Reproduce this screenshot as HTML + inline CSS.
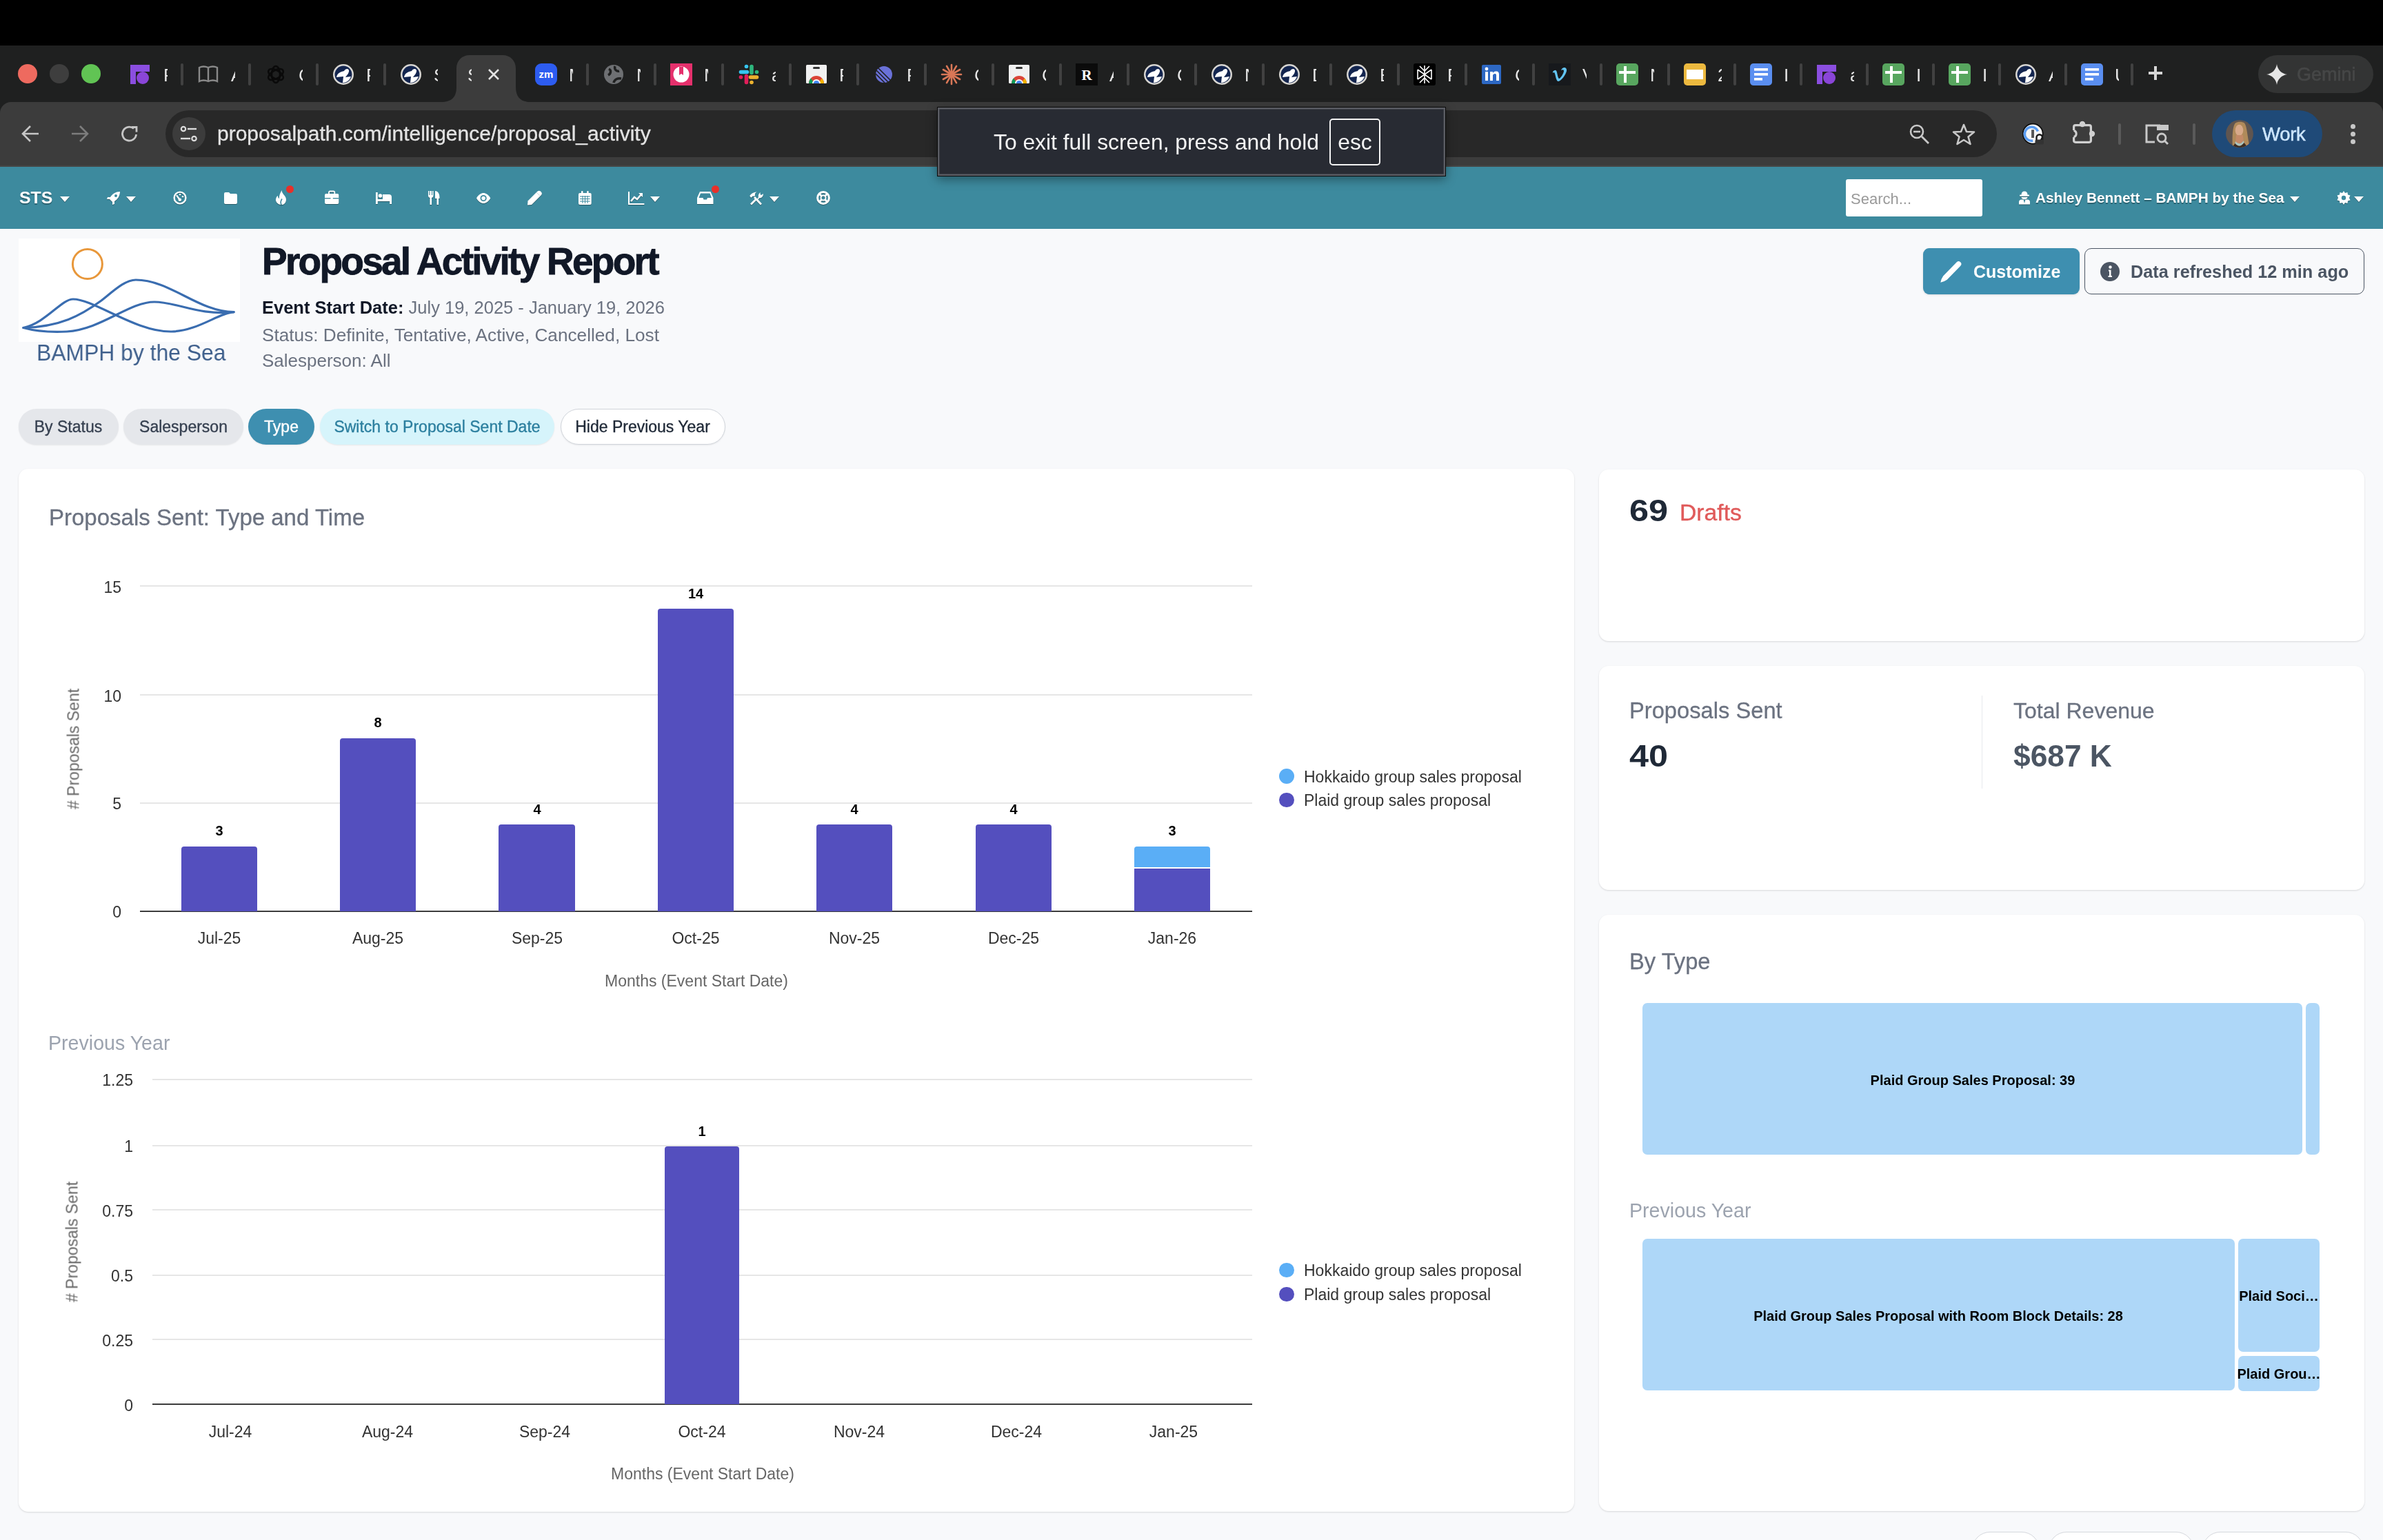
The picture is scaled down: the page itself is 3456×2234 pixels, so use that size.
<!DOCTYPE html>
<html><head><meta charset="utf-8"><title>Proposal Activity Report</title>
<style>
html,body{margin:0;padding:0;width:3456px;height:2234px;overflow:hidden;background:#f8f9fb;font-family:"Liberation Sans", sans-serif;}
.t{will-change:transform;position:absolute;white-space:nowrap;font-family:"Liberation Sans", sans-serif;}
svg{overflow:visible}
</style></head><body>
<div style="position:absolute;left:0px;top:0px;width:3456px;height:66px;background:#000"></div><div style="position:absolute;left:0px;top:66px;width:3456px;height:110px;background:#1f2020"></div><div style="position:absolute;left:25.799999999999997px;top:93px;width:28px;height:28px;background:#ee6a5f;border-radius:50%"></div><div style="position:absolute;left:72px;top:93px;width:28px;height:28px;background:#3e3e3e;border-radius:50%"></div><div style="position:absolute;left:118px;top:93px;width:28px;height:28px;background:#61c454;border-radius:50%"></div><div style="position:absolute;left:261.8px;top:92px;width:4px;height:32px;background:#414141;border-radius:2px"></div><div style="position:absolute;left:360px;top:92px;width:4px;height:32px;background:#414141;border-radius:2px"></div><div style="position:absolute;left:457.7px;top:92px;width:4px;height:32px;background:#414141;border-radius:2px"></div><div style="position:absolute;left:555.9px;top:92px;width:4px;height:32px;background:#414141;border-radius:2px"></div><div style="position:absolute;left:850px;top:92px;width:4px;height:32px;background:#414141;border-radius:2px"></div><div style="position:absolute;left:947.7px;top:92px;width:4px;height:32px;background:#414141;border-radius:2px"></div><div style="position:absolute;left:1045.6px;top:92px;width:4px;height:32px;background:#414141;border-radius:2px"></div><div style="position:absolute;left:1143.8px;top:92px;width:4px;height:32px;background:#414141;border-radius:2px"></div><div style="position:absolute;left:1241.5px;top:92px;width:4px;height:32px;background:#414141;border-radius:2px"></div><div style="position:absolute;left:1339.8px;top:92px;width:4px;height:32px;background:#414141;border-radius:2px"></div><div style="position:absolute;left:1437.8px;top:92px;width:4px;height:32px;background:#414141;border-radius:2px"></div><div style="position:absolute;left:1535.7px;top:92px;width:4px;height:32px;background:#414141;border-radius:2px"></div><div style="position:absolute;left:1633.9px;top:92px;width:4px;height:32px;background:#414141;border-radius:2px"></div><div style="position:absolute;left:1731.8px;top:92px;width:4px;height:32px;background:#414141;border-radius:2px"></div><div style="position:absolute;left:1829.8px;top:92px;width:4px;height:32px;background:#414141;border-radius:2px"></div><div style="position:absolute;left:1928px;top:92px;width:4px;height:32px;background:#414141;border-radius:2px"></div><div style="position:absolute;left:2025.8px;top:92px;width:4px;height:32px;background:#414141;border-radius:2px"></div><div style="position:absolute;left:2123.6px;top:92px;width:4px;height:32px;background:#414141;border-radius:2px"></div><div style="position:absolute;left:2222px;top:92px;width:4px;height:32px;background:#414141;border-radius:2px"></div><div style="position:absolute;left:2320px;top:92px;width:4px;height:32px;background:#414141;border-radius:2px"></div><div style="position:absolute;left:2418px;top:92px;width:4px;height:32px;background:#414141;border-radius:2px"></div><div style="position:absolute;left:2513.8px;top:92px;width:4px;height:32px;background:#414141;border-radius:2px"></div><div style="position:absolute;left:2609.9px;top:92px;width:4px;height:32px;background:#414141;border-radius:2px"></div><div style="position:absolute;left:2705.8px;top:92px;width:4px;height:32px;background:#414141;border-radius:2px"></div><div style="position:absolute;left:2801.7px;top:92px;width:4px;height:32px;background:#414141;border-radius:2px"></div><div style="position:absolute;left:2898px;top:92px;width:4px;height:32px;background:#414141;border-radius:2px"></div><div style="position:absolute;left:2993.8px;top:92px;width:4px;height:32px;background:#414141;border-radius:2px"></div><div style="position:absolute;left:3090px;top:92px;width:4px;height:32px;background:#414141;border-radius:2px"></div><svg style="position:absolute;left:188px;top:92px;" width="32" height="32" viewBox="0 0 32 32"><rect x="1" y="2" width="28" height="28" fill="#8b4ee0"/><rect x="9" y="12" width="20" height="18" fill="#1f2020"/><circle cx="19" cy="21" r="9" fill="#8a45d8"/></svg><div class="t" style="left:237px;top:94px;width:6px;height:30px;overflow:hidden;font-size:26px;line-height:30px;color:#e6e6e6">F</div><svg style="position:absolute;left:285.8px;top:92px;" width="32" height="32" viewBox="0 0 32 32"><path d="M3 6 Q9 3 16 6 Q23 3 29 6 V26 Q23 23 16 26 Q9 23 3 26 Z M16 6 V26" fill="none" stroke="#8a8a8a" stroke-width="2.4"/></svg><div class="t" style="left:334.8px;top:94px;width:6px;height:30px;overflow:hidden;font-size:26px;line-height:30px;color:#e6e6e6">A</div><svg style="position:absolute;left:384px;top:92px;" width="32" height="32" viewBox="0 0 32 32"><g fill="none" stroke="#0a0a0a" stroke-width="2.5"><ellipse cx="16" cy="16" rx="6" ry="12"/><ellipse cx="16" cy="16" rx="6" ry="12" transform="rotate(60 16 16)"/><ellipse cx="16" cy="16" rx="6" ry="12" transform="rotate(120 16 16)"/></g></svg><div class="t" style="left:433px;top:94px;width:6px;height:30px;overflow:hidden;font-size:26px;line-height:30px;color:#e6e6e6">C</div><svg style="position:absolute;left:481.7px;top:92px;" width="32" height="32" viewBox="0 0 32 32"><circle cx="16" cy="16" r="15" fill="#d8d6d2"/><circle cx="16" cy="16" r="12.5" fill="#13254f"/><path d="M6 20 C7 14 12 12 17 11 C19 7 25 7 24 12 C23 16 20 18 19 20 L27 19 C25 25 20 28 15 28 L16 19 C12 19 9 20 6 20 Z" fill="#fff"/></svg><div class="t" style="left:530.7px;top:94px;width:6px;height:30px;overflow:hidden;font-size:26px;line-height:30px;color:#e6e6e6">P</div><svg style="position:absolute;left:579.9px;top:92px;" width="32" height="32" viewBox="0 0 32 32"><circle cx="16" cy="16" r="15" fill="#d8d6d2"/><circle cx="16" cy="16" r="12.5" fill="#13254f"/><path d="M6 20 C7 14 12 12 17 11 C19 7 25 7 24 12 C23 16 20 18 19 20 L27 19 C25 25 20 28 15 28 L16 19 C12 19 9 20 6 20 Z" fill="#fff"/></svg><div class="t" style="left:628.9px;top:94px;width:6px;height:30px;overflow:hidden;font-size:26px;line-height:30px;color:#e6e6e6">S</div><svg style="position:absolute;left:775.7px;top:92px;" width="32" height="32" viewBox="0 0 32 32"><rect x="0" y="0" width="32" height="32" rx="9" fill="#2d5cf0"/><text x="16" y="21" font-family="Liberation Sans" font-weight="700" font-size="15" fill="#fff" text-anchor="middle">zm</text></svg><div class="t" style="left:824.7px;top:94px;width:6px;height:30px;overflow:hidden;font-size:26px;line-height:30px;color:#e6e6e6">M</div><svg style="position:absolute;left:874px;top:92px;" width="32" height="32" viewBox="0 0 32 32"><circle cx="16" cy="16" r="14" fill="#6e7073"/><path d="M9 8 C13 10 12 15 8 17 M18 4 C16 9 21 12 24 11 M16 28 C17 23 22 21 27 22" stroke="#1f2020" stroke-width="3.5" fill="none"/></svg><div class="t" style="left:923px;top:94px;width:6px;height:30px;overflow:hidden;font-size:26px;line-height:30px;color:#e6e6e6">N</div><svg style="position:absolute;left:971.7px;top:92px;" width="32" height="32" viewBox="0 0 32 32"><rect x="0" y="0" width="32" height="32" fill="#e5306c"/><circle cx="16" cy="16" r="11.5" fill="#fff"/><path d="M13 5 V17 L16 15 L19 17 V5" fill="#e5306c"/></svg><div class="t" style="left:1020.7px;top:94px;width:6px;height:30px;overflow:hidden;font-size:26px;line-height:30px;color:#e6e6e6">M</div><svg style="position:absolute;left:1069.6px;top:92px;" width="32" height="32" viewBox="0 0 32 32"><g stroke-linecap="round" stroke-width="5.6"><path d="M4.5 12.5 H13.5" stroke="#36c5f0"/><path d="M20 4.5 V13.5" stroke="#2eb67d"/><path d="M12.5 18.5 V27.5" stroke="#e01e5a"/><path d="M18.5 20 H27.5" stroke="#ecb22e"/></g><circle cx="12.5" cy="4.5" r="2.8" fill="#36c5f0"/><circle cx="27.5" cy="12.5" r="2.8" fill="#2eb67d"/><circle cx="4.5" cy="20" r="2.8" fill="#e01e5a"/><circle cx="20" cy="27.5" r="2.8" fill="#ecb22e"/></svg><div class="t" style="left:1118.6px;top:94px;width:6px;height:30px;overflow:hidden;font-size:26px;line-height:30px;color:#e6e6e6">a</div><svg style="position:absolute;left:1167.8px;top:92px;" width="32" height="32" viewBox="0 0 32 32"><rect x="1" y="2" width="30" height="27" rx="1.5" fill="#f1f1f1"/><rect x="11" y="5" width="10" height="3" rx="1.5" fill="#333"/><path d="M5 29 A11 11 0 0 1 27 29 Z" fill="#db4437"/><path d="M5 29 A11 11 0 0 1 8 21.5 L13 29 Z" fill="#0f9d58"/><path d="M27 29 A11 11 0 0 0 24 21.5 L19 29 Z" fill="#f4b400"/><path d="M10 29 A6 6 0 0 1 22 29 Z" fill="#fff"/><path d="M12 29 A4 4 0 0 1 20 29 Z" fill="#4285f4"/></svg><div class="t" style="left:1216.8px;top:94px;width:6px;height:30px;overflow:hidden;font-size:26px;line-height:30px;color:#e6e6e6">F</div><svg style="position:absolute;left:1265.5px;top:92px;" width="32" height="32" viewBox="0 0 32 32"><circle cx="16" cy="16" r="12" fill="#6a71d8"/><path d="M4 15 L17 28 M5 10 L22 27 M7 6 L26 25" stroke="#1f2020" stroke-width="1.6"/></svg><div class="t" style="left:1314.5px;top:94px;width:6px;height:30px;overflow:hidden;font-size:26px;line-height:30px;color:#e6e6e6">F</div><svg style="position:absolute;left:1363.8px;top:92px;" width="32" height="32" viewBox="0 0 32 32"><g stroke="#d97757" stroke-width="2.6" stroke-linecap="round"><path d="M16 16 L30.0 16.0"/><path d="M16 16 L28.1 23.0"/><path d="M16 16 L23.0 28.1"/><path d="M16 16 L16.0 30.0"/><path d="M16 16 L9.0 28.1"/><path d="M16 16 L3.9 23.0"/><path d="M16 16 L2.0 16.0"/><path d="M16 16 L3.9 9.0"/><path d="M16 16 L9.0 3.9"/><path d="M16 16 L16.0 2.0"/><path d="M16 16 L23.0 3.9"/><path d="M16 16 L28.1 9.0"/></g></svg><div class="t" style="left:1412.8px;top:94px;width:6px;height:30px;overflow:hidden;font-size:26px;line-height:30px;color:#e6e6e6">C</div><svg style="position:absolute;left:1461.8px;top:92px;" width="32" height="32" viewBox="0 0 32 32"><rect x="1" y="2" width="30" height="27" rx="1.5" fill="#f1f1f1"/><rect x="11" y="5" width="10" height="3" rx="1.5" fill="#333"/><path d="M5 29 A11 11 0 0 1 27 29 Z" fill="#db4437"/><path d="M5 29 A11 11 0 0 1 8 21.5 L13 29 Z" fill="#0f9d58"/><path d="M27 29 A11 11 0 0 0 24 21.5 L19 29 Z" fill="#f4b400"/><path d="M10 29 A6 6 0 0 1 22 29 Z" fill="#fff"/><path d="M12 29 A4 4 0 0 1 20 29 Z" fill="#4285f4"/></svg><div class="t" style="left:1510.8px;top:94px;width:6px;height:30px;overflow:hidden;font-size:26px;line-height:30px;color:#e6e6e6">C</div><svg style="position:absolute;left:1559.7px;top:92px;" width="32" height="32" viewBox="0 0 32 32"><rect x="0" y="0" width="32" height="32" fill="#0b0b0b"/><text x="16" y="24" font-family="Liberation Serif" font-weight="700" font-size="21" fill="#fff" text-anchor="middle">R</text></svg><div class="t" style="left:1608.7px;top:94px;width:6px;height:30px;overflow:hidden;font-size:26px;line-height:30px;color:#e6e6e6">A</div><svg style="position:absolute;left:1657.9px;top:92px;" width="32" height="32" viewBox="0 0 32 32"><circle cx="16" cy="16" r="15" fill="#d8d6d2"/><circle cx="16" cy="16" r="12.5" fill="#13254f"/><path d="M6 20 C7 14 12 12 17 11 C19 7 25 7 24 12 C23 16 20 18 19 20 L27 19 C25 25 20 28 15 28 L16 19 C12 19 9 20 6 20 Z" fill="#fff"/></svg><div class="t" style="left:1706.9px;top:94px;width:6px;height:30px;overflow:hidden;font-size:26px;line-height:30px;color:#e6e6e6">C</div><svg style="position:absolute;left:1755.8px;top:92px;" width="32" height="32" viewBox="0 0 32 32"><circle cx="16" cy="16" r="15" fill="#d8d6d2"/><circle cx="16" cy="16" r="12.5" fill="#13254f"/><path d="M6 20 C7 14 12 12 17 11 C19 7 25 7 24 12 C23 16 20 18 19 20 L27 19 C25 25 20 28 15 28 L16 19 C12 19 9 20 6 20 Z" fill="#fff"/></svg><div class="t" style="left:1804.8px;top:94px;width:6px;height:30px;overflow:hidden;font-size:26px;line-height:30px;color:#e6e6e6">N</div><svg style="position:absolute;left:1853.8px;top:92px;" width="32" height="32" viewBox="0 0 32 32"><circle cx="16" cy="16" r="15" fill="#d8d6d2"/><circle cx="16" cy="16" r="12.5" fill="#13254f"/><path d="M6 20 C7 14 12 12 17 11 C19 7 25 7 24 12 C23 16 20 18 19 20 L27 19 C25 25 20 28 15 28 L16 19 C12 19 9 20 6 20 Z" fill="#fff"/></svg><div class="t" style="left:1902.8px;top:94px;width:6px;height:30px;overflow:hidden;font-size:26px;line-height:30px;color:#e6e6e6">D</div><svg style="position:absolute;left:1952px;top:92px;" width="32" height="32" viewBox="0 0 32 32"><circle cx="16" cy="16" r="15" fill="#d8d6d2"/><circle cx="16" cy="16" r="12.5" fill="#13254f"/><path d="M6 20 C7 14 12 12 17 11 C19 7 25 7 24 12 C23 16 20 18 19 20 L27 19 C25 25 20 28 15 28 L16 19 C12 19 9 20 6 20 Z" fill="#fff"/></svg><div class="t" style="left:2001px;top:94px;width:6px;height:30px;overflow:hidden;font-size:26px;line-height:30px;color:#e6e6e6">E</div><svg style="position:absolute;left:2049.8px;top:92px;" width="32" height="32" viewBox="0 0 32 32"><rect x="0" y="0" width="32" height="32" rx="3" fill="#000"/><g stroke="#fff" stroke-width="1.6" fill="none"><path d="M16 3 V29 M6 9 L16 16 L26 9 M6 23 L16 16 L26 23 M6 9 V23 M26 9 V23 M9 4 L16 11 L23 4 M9 28 L16 21 L23 28"/></g></svg><div class="t" style="left:2098.8px;top:94px;width:6px;height:30px;overflow:hidden;font-size:26px;line-height:30px;color:#e6e6e6">F</div><svg style="position:absolute;left:2147.6px;top:92px;" width="32" height="32" viewBox="0 0 32 32"><rect x="1" y="2" width="28" height="28" rx="2" fill="#2d68c4"/><rect x="6" y="12" width="4" height="13" fill="#fff"/><circle cx="8" cy="8" r="2.4" fill="#fff"/><path d="M13 12 H17 V14 C18 12 20 11.5 22 11.5 C25 11.5 26 13.5 26 16 V25 H22 V17 C22 15.5 21 15 20 15 C18.5 15 17 16 17 17.5 V25 H13 Z" fill="#fff"/></svg><div class="t" style="left:2196.6px;top:94px;width:6px;height:30px;overflow:hidden;font-size:26px;line-height:30px;color:#e6e6e6">C</div><svg style="position:absolute;left:2246px;top:92px;" width="32" height="32" viewBox="0 0 32 32"><rect x="0" y="0" width="32" height="32" fill="#17191c"/><path d="M6 12 C9 9 11 9 12 13 C13 18 14 22 15 22 C17 22 22 14 22 11 C22 9 20 9 18 10 C20 4 27 5 26 11 C25 16 18 26 14 26 C11 26 10 18 9 15 C8 12 7 13 6 14 Z" fill="#62c4f2"/></svg><div class="t" style="left:2295px;top:94px;width:6px;height:30px;overflow:hidden;font-size:26px;line-height:30px;color:#e6e6e6">V</div><svg style="position:absolute;left:2344px;top:92px;" width="32" height="32" viewBox="0 0 32 32"><rect x="0" y="0" width="32" height="32" rx="5" fill="#58a65f"/><rect x="4" y="11" width="24" height="4" fill="#fff"/><rect x="11" y="4" width="4" height="24" fill="#fff"/></svg><div class="t" style="left:2393px;top:94px;width:6px;height:30px;overflow:hidden;font-size:26px;line-height:30px;color:#e6e6e6">N</div><svg style="position:absolute;left:2442px;top:92px;" width="32" height="32" viewBox="0 0 32 32"><rect x="0" y="0" width="32" height="32" rx="5" fill="#ecb93f"/><rect x="4" y="9" width="24" height="14" fill="#fff"/></svg><div class="t" style="left:2491px;top:94px;width:6px;height:30px;overflow:hidden;font-size:26px;line-height:30px;color:#e6e6e6">2</div><svg style="position:absolute;left:2537.8px;top:92px;" width="32" height="32" viewBox="0 0 32 32"><rect x="0" y="0" width="32" height="32" rx="5" fill="#5a8ef0"/><rect x="6" y="7" width="20" height="3.6" fill="#fff"/><rect x="6" y="14" width="20" height="3.6" fill="#fff"/><rect x="6" y="21" width="12" height="3.6" fill="#fff"/></svg><div class="t" style="left:2586.8px;top:94px;width:6px;height:30px;overflow:hidden;font-size:26px;line-height:30px;color:#e6e6e6">I</div><svg style="position:absolute;left:2633.9px;top:92px;" width="32" height="32" viewBox="0 0 32 32"><rect x="1" y="2" width="28" height="28" fill="#8b4ee0"/><rect x="9" y="12" width="20" height="18" fill="#1f2020"/><circle cx="19" cy="21" r="9" fill="#8a45d8"/></svg><div class="t" style="left:2682.9px;top:94px;width:6px;height:30px;overflow:hidden;font-size:26px;line-height:30px;color:#e6e6e6">a</div><svg style="position:absolute;left:2729.8px;top:92px;" width="32" height="32" viewBox="0 0 32 32"><rect x="0" y="0" width="32" height="32" rx="5" fill="#58a65f"/><rect x="4" y="11" width="24" height="4" fill="#fff"/><rect x="11" y="4" width="4" height="24" fill="#fff"/></svg><div class="t" style="left:2778.8px;top:94px;width:6px;height:30px;overflow:hidden;font-size:26px;line-height:30px;color:#e6e6e6">I</div><svg style="position:absolute;left:2825.7px;top:92px;" width="32" height="32" viewBox="0 0 32 32"><rect x="0" y="0" width="32" height="32" rx="5" fill="#58a65f"/><rect x="4" y="11" width="24" height="4" fill="#fff"/><rect x="11" y="4" width="4" height="24" fill="#fff"/></svg><div class="t" style="left:2874.7px;top:94px;width:6px;height:30px;overflow:hidden;font-size:26px;line-height:30px;color:#e6e6e6">I</div><svg style="position:absolute;left:2922px;top:92px;" width="32" height="32" viewBox="0 0 32 32"><circle cx="16" cy="16" r="15" fill="#d8d6d2"/><circle cx="16" cy="16" r="12.5" fill="#13254f"/><path d="M6 20 C7 14 12 12 17 11 C19 7 25 7 24 12 C23 16 20 18 19 20 L27 19 C25 25 20 28 15 28 L16 19 C12 19 9 20 6 20 Z" fill="#fff"/></svg><div class="t" style="left:2971px;top:94px;width:6px;height:30px;overflow:hidden;font-size:26px;line-height:30px;color:#e6e6e6">A</div><svg style="position:absolute;left:3017.8px;top:92px;" width="32" height="32" viewBox="0 0 32 32"><rect x="0" y="0" width="32" height="32" rx="5" fill="#5a8ef0"/><rect x="6" y="7" width="20" height="3.6" fill="#fff"/><rect x="6" y="14" width="20" height="3.6" fill="#fff"/><rect x="6" y="21" width="12" height="3.6" fill="#fff"/></svg><div class="t" style="left:3066.8px;top:94px;width:6px;height:30px;overflow:hidden;font-size:26px;line-height:30px;color:#e6e6e6">U</div><svg style="position:absolute;left:640px;top:80px" width="130" height="68" viewBox="0 0 130 68"><path d="M0 68 C14 68 22 62 22 46 V19 C22 8 30 0 41 0 H89 C100 0 108 8 108 19 V46 C108 62 116 68 130 68 Z" fill="#3c3c3c"/></svg><div class="t" style="left:678px;top:94px;width:6px;height:30px;overflow:hidden;font-size:26px;line-height:30px;color:#e6e6e6">S</div><svg style="position:absolute;left:706px;top:98px;" width="20" height="20" viewBox="0 0 20 20"><path d="M3 3 L17 17 M17 3 L3 17" stroke="#e3e3e3" stroke-width="2.6"/></svg><svg style="position:absolute;left:3114px;top:94px;" width="24" height="24" viewBox="0 0 24 24"><path d="M12 2 V22 M2 12 H22" stroke="#d6d6d6" stroke-width="4"/></svg><div style="position:absolute;left:3274.6px;top:80px;width:167px;height:55.4px;background:#333434;border-radius:28px"></div><svg style="position:absolute;left:3286px;top:92px;" width="32" height="32" viewBox="0 0 32 32"><path d="M16 1 C17 9 23 15 31 16 C23 17 17 23 16 31 C15 23 9 17 1 16 C9 15 15 9 16 1 Z" fill="#e6e6e6"/></svg><div class="t" style="left:3331px;top:95.1px;font-size:27px;line-height:27px;color:#464747;font-weight:400;-webkit-text-stroke:0.7px #464747;">Gemini</div><div style="position:absolute;left:0px;top:148px;width:3456px;height:94px;background:#3c3c3c;border-radius:16px 16px 0 0"></div><div style="position:absolute;left:3436px;top:148px;width:20px;height:20px;background:#1f2020"></div><div style="position:absolute;left:3436px;top:148px;width:20px;height:20px;background:#3c3c3c;border-radius:0 16px 0 0"></div><svg style="position:absolute;left:30px;top:180px;" width="28" height="28" viewBox="0 0 28 28"><path d="M26 14 H4 M14 3 L3 14 L14 25" fill="none" stroke="#c6c6c6" stroke-width="2.6"/></svg><svg style="position:absolute;left:102px;top:180px;" width="28" height="28" viewBox="0 0 28 28"><path d="M2 14 H24 M14 3 L25 14 L14 25" fill="none" stroke="#7d7d7d" stroke-width="2.6"/></svg><svg style="position:absolute;left:174px;top:180px;" width="28" height="28" viewBox="0 0 28 28"><path d="M23.5 15 A10 10 0 1 1 20 6.5" fill="none" stroke="#c6c6c6" stroke-width="2.8"/><path d="M17 4.5 H24 V11.5" fill="none" stroke="#c6c6c6" stroke-width="2.8"/></svg><div style="position:absolute;left:240px;top:160px;width:2656px;height:67.7px;background:#282828;border-radius:34px"></div><div style="position:absolute;left:250px;top:170px;width:48px;height:48px;background:#3c3c3c;border-radius:50%"></div><svg style="position:absolute;left:258px;top:178px;" width="32" height="32" viewBox="0 0 32 32"><circle cx="8" cy="9" r="3.2" fill="none" stroke="#dcdcdc" stroke-width="2.2"/><path d="M14 9 H27" stroke="#dcdcdc" stroke-width="2.4"/><circle cx="23.5" cy="23" r="3.2" fill="none" stroke="#dcdcdc" stroke-width="2.2"/><path d="M4 23 H18" stroke="#dcdcdc" stroke-width="2.4"/></svg><div class="t" style="left:315px;top:179.4px;font-size:30px;line-height:30px;color:#e3e3e3;font-weight:400;-webkit-text-stroke:0.3px #e3e3e3;">proposalpath.com/intelligence/proposal_activity</div><svg style="position:absolute;left:2768px;top:179px;" width="32" height="32" viewBox="0 0 32 32"><circle cx="12" cy="12" r="9" fill="none" stroke="#c8c8c8" stroke-width="2.6"/><path d="M7 12 H17" stroke="#c8c8c8" stroke-width="2.6"/><path d="M19 19 L29 29" stroke="#c8c8c8" stroke-width="2.8"/></svg><svg style="position:absolute;left:2831px;top:178px;" width="34" height="34" viewBox="0 0 34 34"><path d="M17 3 L21 13 L32 13.5 L23.5 20.5 L26.5 31 L17 25 L7.5 31 L10.5 20.5 L2 13.5 L13 13 Z" fill="none" stroke="#c8c8c8" stroke-width="2.6" stroke-linejoin="round"/></svg><svg style="position:absolute;left:2932px;top:178px;" width="34" height="34" viewBox="0 0 34 34"><circle cx="16.2" cy="16.1" r="15.3" fill="#0d0d0d"/><circle cx="16.2" cy="16.1" r="13.6" fill="#f6f6f6"/><path d="M23.5 12.5 A10 10 0 1 0 16.2 26.1" fill="none" stroke="#5a9cf0" stroke-width="3.6"/><rect x="14.1" y="10.2" width="3.9" height="11.8" fill="#555"/><path d="M21.5 25 V21.5 A4.3 4.3 0 0 1 30.1 21.5 V25" fill="none" stroke="#1a1a1a" stroke-width="2.4"/><rect x="19.5" y="24.5" width="12.5" height="7" rx="2" fill="#333"/></svg><svg style="position:absolute;left:3003px;top:174px;" width="40" height="38" viewBox="0 0 40 38"><rect x="4.6" y="7.6" width="24.8" height="24.7" rx="2.5" fill="none" stroke="#d0d0d0" stroke-width="3.2"/><circle cx="17" cy="6" r="4.2" fill="#d0d0d0"/><circle cx="31" cy="20" r="4.2" fill="#d0d0d0"/><rect x="2" y="15" width="5" height="10" fill="#3c3c3c"/><path d="M4.6 15.2 A5 5 0 0 1 4.6 24.8" fill="none" stroke="#d0d0d0" stroke-width="3"/></svg><div style="position:absolute;left:3071.5px;top:178.5px;width:4px;height:31px;background:#5a5a5a;border-radius:2px"></div><svg style="position:absolute;left:3109px;top:178px;" width="40" height="34" viewBox="0 0 40 34"><path d="M16 28 H4 V4 H24" fill="none" stroke="#c8c8c8" stroke-width="3"/><rect x="19" y="3" width="17" height="8" fill="#c8c8c8"/><circle cx="26" cy="22" r="6" fill="none" stroke="#c8c8c8" stroke-width="2.8"/><path d="M30 26 L35 31" stroke="#c8c8c8" stroke-width="3"/></svg><div style="position:absolute;left:3179.7px;top:178.5px;width:4px;height:31px;background:#5a5a5a;border-radius:2px"></div><div style="position:absolute;left:3208px;top:160px;width:160px;height:68px;background:#1f4a78;border-radius:34px"></div><svg style="position:absolute;left:3228.1px;top:174px;" width="40" height="40" viewBox="0 0 40 40"><defs><clipPath id="av"><circle cx="20" cy="20" r="19.9"/></clipPath></defs><g clip-path="url(#av)"><rect width="40" height="40" fill="#5f5550"/><path d="M10 40 C9 25 10 8 14 4.5 C17 2 24 2 27 4.5 C31 9 31 25 35 40 Z" fill="#b08a5a"/><ellipse cx="19.5" cy="15" rx="5.8" ry="8.3" fill="#d8a98a"/><path d="M15 22 H25 L26 34 H14 Z" fill="#c48a68"/><path d="M14 31 Q20 38 26 30 L26.5 33 Q20 42 13.5 34 Z" fill="#a8c3be"/><path d="M9 40 L13.5 34 Q20 42 26.5 33 L32 40 Z" fill="#3b2d25"/><path d="M30 36 Q34 33 37 37 L37 40 L31 40 Z" fill="#c48a68"/></g></svg><div class="t" style="left:3281px;top:181.0px;font-size:27.5px;line-height:27.5px;color:#cde6ff;font-weight:400;-webkit-text-stroke:0.45px #cde6ff;letter-spacing:-0.3px;">Work</div><div style="position:absolute;left:3408.5px;top:179.5px;width:7px;height:7px;background:#c8c8c8;border-radius:50%"></div><div style="position:absolute;left:3408.5px;top:190.5px;width:7px;height:7px;background:#c8c8c8;border-radius:50%"></div><div style="position:absolute;left:3408.5px;top:201.5px;width:7px;height:7px;background:#c8c8c8;border-radius:50%"></div><div style="position:absolute;left:0px;top:240px;width:3456px;height:2px;background:#464646"></div><div style="position:absolute;left:0px;top:242px;width:3456px;height:89.5px;background:#3d8a9e"></div><div class="t" style="left:28px;top:274.7px;font-size:24.8px;line-height:24.8px;color:#fff;font-weight:700;text-shadow:0 1.5px 1px rgba(0,0,0,0.3);">STS</div><svg style="position:absolute;left:87px;top:285.3px;filter:drop-shadow(0 1.5px 0.5px rgba(0,0,0,0.35));" width="14" height="8" viewBox="0 0 14 8"><path d="M0 0 H14 L7 8 Z" fill="#fff"/></svg><svg style="position:absolute;left:183.4px;top:285.3px;filter:drop-shadow(0 1.5px 0.5px rgba(0,0,0,0.35));" width="14" height="8" viewBox="0 0 14 8"><path d="M0 0 H14 L7 8 Z" fill="#fff"/></svg><svg style="position:absolute;left:942.9px;top:285.3px;filter:drop-shadow(0 1.5px 0.5px rgba(0,0,0,0.35));" width="14" height="8" viewBox="0 0 14 8"><path d="M0 0 H14 L7 8 Z" fill="#fff"/></svg><svg style="position:absolute;left:1116.4px;top:285.3px;filter:drop-shadow(0 1.5px 0.5px rgba(0,0,0,0.35));" width="14" height="8" viewBox="0 0 14 8"><path d="M0 0 H14 L7 8 Z" fill="#fff"/></svg><svg style="position:absolute;left:155px;top:277px;filter:drop-shadow(0 1.5px 0.5px rgba(0,0,0,0.35));" width="20" height="20" viewBox="0 0 20 20"><path d="M19 1 C13 1 8 4 5 9 L1 9 L0 12 L4 12 L8 16 L8 20 L11 19 L11 15 C16 12 19 7 19 1 Z" fill="#fff"/><circle cx="13" cy="7" r="2" fill="#3d8a9e"/></svg><svg style="position:absolute;left:251px;top:277px;filter:drop-shadow(0 1.5px 0.5px rgba(0,0,0,0.35));" width="20" height="20" viewBox="0 0 20 20"><circle cx="10" cy="10" r="8.4" fill="none" stroke="#fff" stroke-width="2.4"/><path d="M5.5 7 L9 12" stroke="#fff" stroke-width="2.2" stroke-linecap="round"/><circle cx="9.8" cy="12.8" r="2.3" fill="#fff"/><circle cx="10" cy="5.2" r="1.2" fill="#fff"/><circle cx="14" cy="8.2" r="1.2" fill="#fff"/></svg><svg style="position:absolute;left:324.7px;top:278px;filter:drop-shadow(0 1.5px 0.5px rgba(0,0,0,0.35));" width="19" height="18" viewBox="0 0 19 18"><path d="M0 3 A2 2 0 0 1 2 1 H7 L9 3 H17 A2 2 0 0 1 19 5 V16 A2 2 0 0 1 17 18 H2 A2 2 0 0 1 0 16 Z" fill="#fff"/></svg><svg style="position:absolute;left:398.8px;top:276px;filter:drop-shadow(0 1.5px 0.5px rgba(0,0,0,0.35));" width="17" height="21" viewBox="0 0 17 21"><path d="M9.5 0 C10 5 14 7 15.5 11 C17 15.5 14.5 21 9.5 21 C4 21 0.5 17 1 13 C1.5 10 3 8.5 4 8 C4 10 4.5 11.5 6 12 C5.5 8 7.5 4 9.5 0 Z" fill="#fff"/><path d="M9.3 21.5 C7.5 18.5 7.8 15.5 10 12.5" fill="none" stroke="#3d8a9e" stroke-width="1.6"/></svg><div style="position:absolute;left:415.2px;top:268.9px;width:11px;height:11px;background:#e8302a;border-radius:50%"></div><svg style="position:absolute;left:470.9px;top:277px;filter:drop-shadow(0 1.5px 0.5px rgba(0,0,0,0.35));" width="20.3" height="19" viewBox="0 0 20.3 19"><rect x="0" y="4" width="20.3" height="15" rx="2" fill="#fff"/><path d="M6 4 V2 A1.5 1.5 0 0 1 7.5 0.5 H12.8 A1.5 1.5 0 0 1 14.3 2 V4" fill="none" stroke="#fff" stroke-width="1.8"/><rect x="0" y="10" width="20.3" height="1.4" fill="#3d8a9e"/><rect x="8.5" y="9" width="3.3" height="3" fill="#fff"/></svg><svg style="position:absolute;left:545px;top:279px;filter:drop-shadow(0 1.5px 0.5px rgba(0,0,0,0.35));" width="23" height="17" viewBox="0 0 23 17"><rect x="0" y="0" width="2.8" height="17" fill="#fff"/><rect x="0" y="10" width="23" height="3" fill="#fff"/><rect x="20.2" y="7" width="2.8" height="10" fill="#fff"/><circle cx="6.5" cy="5" r="2.8" fill="#fff"/><path d="M10 3 H19 A4 4 0 0 1 23 7 V10 H10 Z" fill="#fff"/></svg><svg style="position:absolute;left:621.3px;top:277px;filter:drop-shadow(0 1.5px 0.5px rgba(0,0,0,0.35));" width="16.5" height="20" viewBox="0 0 16.5 20"><path d="M0 0 V7 A3 3 0 0 0 2.5 10 V20 H5 V10 A3 3 0 0 0 7.5 7 V0 H6 V6 H5 V0 H2.5 V6 H1.5 V0 Z" fill="#fff"/><path d="M10 11 V0 C14 0 16.5 4 16.5 9 V11 H15 V20 H12.5 V11 Z" fill="#fff"/></svg><svg style="position:absolute;left:691px;top:279.5px;filter:drop-shadow(0 1.5px 0.5px rgba(0,0,0,0.35));" width="20.3" height="15" viewBox="0 0 20.3 15"><path d="M0 7.5 C3 2 7 0 10.15 0 C13.3 0 17.3 2 20.3 7.5 C17.3 13 13.3 15 10.15 15 C7 15 3 13 0 7.5 Z" fill="#fff"/><circle cx="10.15" cy="7.5" r="4.6" fill="#3d8a9e"/><circle cx="10.15" cy="7.5" r="2.8" fill="#fff"/></svg><svg style="position:absolute;left:764.7px;top:277px;filter:drop-shadow(0 1.5px 0.5px rgba(0,0,0,0.35));" width="20.5" height="20.5" viewBox="0 0 20.5 20.5"><path d="M13 2 L18.5 7.5 L6 20 L0 20.5 L0.5 14.5 Z" fill="#fff"/><path d="M14 1 A3 3 0 0 1 19.5 6.5 L18.5 7.5 L13 2 Z" fill="#fff"/></svg><svg style="position:absolute;left:838.8px;top:277px;filter:drop-shadow(0 1.5px 0.5px rgba(0,0,0,0.35));" width="18.7" height="20" viewBox="0 0 18.7 20"><rect x="0" y="3" width="18.7" height="17" rx="2" fill="#fff"/><rect x="4" y="0" width="2.5" height="5" rx="1" fill="#fff"/><rect x="12.2" y="0" width="2.5" height="5" rx="1" fill="#fff"/><g fill="#3d8a9e"><rect x="2" y="7.5" width="14.7" height="1"/><rect x="2" y="11" width="14.7" height="1"/><rect x="2" y="14.5" width="14.7" height="1"/><rect x="5.5" y="7" width="1" height="11"/><rect x="9" y="7" width="1" height="11"/><rect x="12.5" y="7" width="1" height="11"/></g></svg><svg style="position:absolute;left:910.9px;top:278px;filter:drop-shadow(0 1.5px 0.5px rgba(0,0,0,0.35));" width="23.4" height="19" viewBox="0 0 23.4 19"><path d="M1 0 V18 H23.4" fill="none" stroke="#fff" stroke-width="2"/><path d="M4 14 L9 8 L13 11 L19 4" fill="none" stroke="#fff" stroke-width="2.6"/><path d="M15 2 H21 V8 Z" fill="#fff"/></svg><svg style="position:absolute;left:1010.5px;top:278px;filter:drop-shadow(0 1.5px 0.5px rgba(0,0,0,0.35));" width="23.5" height="18" viewBox="0 0 23.5 18"><path d="M4 0 H19.5 L23.5 9 V18 H0 V9 Z" fill="#fff"/><path d="M2.5 9 L5 2.5 H18.5 L21 9 H15 L14 11.5 H9.5 L8.5 9 Z" fill="#3d8a9e"/></svg><div style="position:absolute;left:1031.5px;top:268.9px;width:11px;height:11px;background:#e8302a;border-radius:50%"></div><svg style="position:absolute;left:1087.3px;top:277.8px;filter:drop-shadow(0 1.5px 0.5px rgba(0,0,0,0.35));" width="20" height="19" viewBox="0 0 20 19"><path d="M8 9 L16 17.5" stroke="#fff" stroke-width="2.8" stroke-linecap="square"/><path d="M0.3 6.3 C2 3.5 5 1 10.5 0.5 C8.5 1.8 7.5 3 8 5.5 L6.8 7.2 L5.2 6.2 L2.2 8.8 Z" fill="#fff"/><path d="M3 17.5 L9 11.5" stroke="#fff" stroke-width="2.8" stroke-linecap="square"/><path d="M10.5 11.5 L13 8 C12.3 5 13.5 2.5 16 1 C15.2 2.5 15.5 4.2 17 5 C18 4.5 19.2 3.8 19.8 3 C20.3 6 18.5 8.5 16 9.2 L14.2 9.3 L12 12 Z" fill="#fff"/></svg><svg style="position:absolute;left:1184px;top:277px;filter:drop-shadow(0 1.5px 0.5px rgba(0,0,0,0.35));" width="20" height="20" viewBox="0 0 20 20"><circle cx="10" cy="10" r="8.4" fill="none" stroke="#fff" stroke-width="3"/><circle cx="10" cy="10" r="3.5" fill="none" stroke="#fff" stroke-width="2"/><path d="M4 4 L7.5 7.5 M16 4 L12.5 7.5 M4 16 L7.5 12.5 M16 16 L12.5 12.5" stroke="#fff" stroke-width="3"/></svg><div style="position:absolute;left:2677px;top:259.6px;width:198px;height:54px;background:#fff;border-radius:3px"></div><div class="t" style="left:2684.3px;top:277.8px;font-size:22px;line-height:22px;color:#999;font-weight:400;">Search...</div><svg style="position:absolute;left:2928px;top:277px;filter:drop-shadow(0 1.5px 0.5px rgba(0,0,0,0.35));" width="16" height="20" viewBox="0 0 16 20"><path d="M3.5 6 Q3.5 0.5 8 0.5 Q12.5 0.5 12.5 6 Z" fill="#fff"/><rect x="1" y="5.5" width="14" height="2.2" rx="1" fill="#fff"/><path d="M3.5 9 H12.5 Q12.5 12 8 12 Q3.5 12 3.5 9 Z" fill="#fff"/><path d="M0 19.5 V16 Q0 12.5 4 12.5 H12 Q16 12.5 16 16 V19.5 Z" fill="#fff"/><path d="M6.5 12.5 L8 18 L9.5 12.5 Z" fill="#3d8a9e"/></svg><div class="t" style="left:2951.6px;top:277.4px;font-size:20.8px;line-height:20.8px;color:#fff;font-weight:700;text-shadow:0 1.5px 1px rgba(0,0,0,0.3);">Ashley Bennett – BAMPH by the Sea</div><svg style="position:absolute;left:3321px;top:285.3px;filter:drop-shadow(0 1.5px 0.5px rgba(0,0,0,0.35));" width="14" height="8" viewBox="0 0 14 8"><path d="M0 0 H14 L7 8 Z" fill="#fff"/></svg><svg style="position:absolute;left:3389px;top:277px;filter:drop-shadow(0 1.5px 0.5px rgba(0,0,0,0.35));" width="20" height="20" viewBox="0 0 20 20"><path d="M10 0 L12 3 L15.5 2 L16 5.5 L19.5 6.5 L18 10 L19.5 13.5 L16 14.5 L15.5 18 L12 17 L10 20 L8 17 L4.5 18 L4 14.5 L0.5 13.5 L2 10 L0.5 6.5 L4 5.5 L4.5 2 L8 3 Z" fill="#fff"/><circle cx="10" cy="10" r="3.2" fill="#3d8a9e"/></svg><svg style="position:absolute;left:3414px;top:285.3px;filter:drop-shadow(0 1.5px 0.5px rgba(0,0,0,0.35));" width="14" height="8" viewBox="0 0 14 8"><path d="M0 0 H14 L7 8 Z" fill="#fff"/></svg><div style="position:absolute;left:0px;top:331.5px;width:3456px;height:1902.5px;background:#f8f9fb"></div><div style="position:absolute;left:26.8px;top:346px;width:321.4px;height:149.5px;background:#fff"></div><svg style="position:absolute;left:26.8px;top:346px;" width="321.4" height="149.5" viewBox="0 0 321.4 149.5">
<circle cx="99.9" cy="37" r="21.5" fill="none" stroke="#e8973a" stroke-width="3"/>
<g fill="none" stroke="#3a6db0" stroke-width="3.2" stroke-linecap="round">
<path d="M7 129.5 C40 122 62 88 79 88 C110 88 170 136 222 135 C260 134 290 108 312 106.7"/>
<path d="M7 129.5 C60 128 90 112 120 90 C140 74 155 60 170 60 C220 60 260 106 312 106.7"/>
<path d="M7 129.5 C30 136 50 136 70 135 C120 132 160 92 197 92 C230 92 260 112 312 106.7"/>
</g></svg><div class="t" style="left:53px;top:493.5px;font-size:34px;line-height:34px;color:#3e5f8c;font-weight:400;transform:scaleX(0.937);transform-origin:0 0;">BAMPH by the Sea</div><div class="t" style="left:380px;top:352.4px;font-size:55px;line-height:55px;color:#111827;font-weight:700;letter-spacing:-2.75px;-webkit-text-stroke:0.9px #111827;">Proposal Activity Report</div><div class="t" style="left:380px;top:434.0px;font-size:25.5px;line-height:25.5px;color:#6b7280"><b style="color:#111827">Event Start Date:</b> July 19, 2025 - January 19, 2026</div><div class="t" style="left:380px;top:472.6px;font-size:26.2px;line-height:26.2px;color:#6b7280;font-weight:400;">Status: Definite, Tentative, Active, Cancelled, Lost</div><div class="t" style="left:380px;top:509.7px;font-size:26px;line-height:26px;color:#6b7280;font-weight:400;">Salesperson: All</div><div style="position:absolute;left:26.8px;top:593px;width:144.89999999999998px;height:52px;background:#e5e7eb;border-radius:26px;box-shadow:0 1px 2px rgba(0,0,0,0.08)"></div><div class="t" style="left:-400.75px;width:1000px;text-align:center;top:608.3px;font-size:23px;line-height:23px;color:#374151;font-weight:400;-webkit-text-stroke:0.35px #374151;">By Status</div><div style="position:absolute;left:179px;top:593px;width:173.7px;height:52px;background:#e5e7eb;border-radius:26px;box-shadow:0 1px 2px rgba(0,0,0,0.08)"></div><div class="t" style="left:-234.14999999999998px;width:1000px;text-align:center;top:608.3px;font-size:23px;line-height:23px;color:#374151;font-weight:400;-webkit-text-stroke:0.35px #374151;">Salesperson</div><div style="position:absolute;left:360px;top:593px;width:95.69999999999999px;height:52px;background:#3e8fb0;border-radius:26px;box-shadow:0 1px 2px rgba(0,0,0,0.08)"></div><div class="t" style="left:-92.14999999999998px;width:1000px;text-align:center;top:608.3px;font-size:23px;line-height:23px;color:#ffffff;font-weight:400;-webkit-text-stroke:0.35px #ffffff;">Type</div><div style="position:absolute;left:464px;top:593px;width:339.79999999999995px;height:52px;background:#d6f4fb;border-radius:26px;box-shadow:0 1px 2px rgba(0,0,0,0.08)"></div><div class="t" style="left:133.89999999999998px;width:1000px;text-align:center;top:608.3px;font-size:23px;line-height:23px;color:#2c7f9f;font-weight:400;-webkit-text-stroke:0.35px #2c7f9f;">Switch to Proposal Sent Date</div><div style="position:absolute;left:812.5px;top:593px;width:239.20000000000005px;height:52px;background:#ffffff;border-radius:26px;border:1.5px solid #d1d5db;box-sizing:border-box;box-shadow:0 1px 2px rgba(0,0,0,0.08)"></div><div class="t" style="left:432.1px;width:1000px;text-align:center;top:608.3px;font-size:23px;line-height:23px;color:#1f2937;font-weight:400;-webkit-text-stroke:0.35px #1f2937;">Hide Previous Year</div><div style="position:absolute;left:2789px;top:360px;width:226.7px;height:67px;background:#3e8fb0;border-radius:9px;box-shadow:0 1px 3px rgba(0,0,0,0.12)"></div><svg style="position:absolute;left:2812px;top:378px;" width="34" height="34" viewBox="0 0 34 34"><path d="M25.76 2.36 A3.8 3.8 0 0 1 31.24 7.64 L11.74 27.64 Q7 31 2.3 31.7 Q3 27 6.26 22.36 Z" fill="#fff"/></svg><div class="t" style="left:2861.8px;top:382.4px;font-size:25px;line-height:25px;color:#fff;font-weight:700;">Customize</div><div style="position:absolute;left:3023px;top:360px;width:405.7px;height:67px;background:transparent;border:1.5px solid #4b5563;border-radius:10px;box-sizing:border-box"></div><svg style="position:absolute;left:3046px;top:379.5px;" width="28" height="28" viewBox="0 0 28 28"><circle cx="14" cy="14" r="14" fill="#4b5563"/><circle cx="14.5" cy="7.5" r="2.2" fill="#fff"/><path d="M12 11.5 H15.5 V20 H17 V22 H11.5 V20 H13 V13.5 H12 Z" fill="#fff"/></svg><div class="t" style="left:3089.6px;top:382.2px;font-size:25.3px;line-height:25.3px;color:#4b5563;font-weight:700;">Data refreshed 12 min ago</div><div style="position:absolute;left:26.9px;top:680px;width:2256.1px;height:1512.5px;background:#fff;border-radius:14px;box-shadow:0 1px 3px rgba(0,0,0,0.09),0 1px 2px rgba(0,0,0,0.05)"></div><div style="position:absolute;left:2319px;top:681px;width:1109.8px;height:248.7px;background:#fff;border-radius:14px;box-shadow:0 1px 3px rgba(0,0,0,0.09),0 1px 2px rgba(0,0,0,0.05)"></div><div style="position:absolute;left:2319px;top:966px;width:1109.8px;height:324.6px;background:#fff;border-radius:14px;box-shadow:0 1px 3px rgba(0,0,0,0.09),0 1px 2px rgba(0,0,0,0.05)"></div><div style="position:absolute;left:2319px;top:1326.7px;width:1109.8px;height:865.5px;background:#fff;border-radius:14px;box-shadow:0 1px 3px rgba(0,0,0,0.09),0 1px 2px rgba(0,0,0,0.05)"></div><div class="t" style="left:71.3px;top:734.1px;font-size:33px;line-height:33px;color:#6b7280;font-weight:400;-webkit-text-stroke:0.3px #6b7280;">Proposals Sent: Type and Time</div><div style="position:absolute;left:203px;top:849px;width:1613px;height:2px;background:#e6e6e6"></div><div class="t" style="left:-824px;width:1000px;text-align:right;top:840.5px;font-size:23px;line-height:23px;color:#333;font-weight:400;">15</div><div style="position:absolute;left:203px;top:1007px;width:1613px;height:2px;background:#e6e6e6"></div><div class="t" style="left:-824px;width:1000px;text-align:right;top:998.5px;font-size:23px;line-height:23px;color:#333;font-weight:400;">10</div><div style="position:absolute;left:203px;top:1163.8px;width:1613px;height:2px;background:#e6e6e6"></div><div class="t" style="left:-824px;width:1000px;text-align:right;top:1155.3px;font-size:23px;line-height:23px;color:#333;font-weight:400;">5</div><div style="position:absolute;left:203px;top:1320.5px;width:1613px;height:2.2px;background:#3c3c3c"></div><div class="t" style="left:-824px;width:1000px;text-align:right;top:1312.1px;font-size:23px;line-height:23px;color:#333;font-weight:400;">0</div><div style="position:absolute;left:262.64185714285713px;top:1227.6999999999998px;width:110.14485714285713px;height:93.9px;background:#544fbe;border-radius:4px 4px 0 0"></div><div class="t" style="left:-182.28571428571428px;width:1000px;text-align:center;top:1194.8px;font-size:20px;line-height:20px;color:#000;font-weight:700;">3</div><div class="t" style="left:-182.28571428571428px;width:1000px;text-align:center;top:1349.8px;font-size:23px;line-height:23px;color:#333;font-weight:400;">Jul-25</div><div style="position:absolute;left:493.0704285714285px;top:1071.1999999999998px;width:110.14485714285713px;height:250.4px;background:#544fbe;border-radius:4px 4px 0 0"></div><div class="t" style="left:48.14285714285711px;width:1000px;text-align:center;top:1038.3px;font-size:20px;line-height:20px;color:#000;font-weight:700;">8</div><div class="t" style="left:48.14285714285711px;width:1000px;text-align:center;top:1349.8px;font-size:23px;line-height:23px;color:#333;font-weight:400;">Aug-25</div><div style="position:absolute;left:723.499px;top:1196.3999999999999px;width:110.14485714285713px;height:125.2px;background:#544fbe;border-radius:4px 4px 0 0"></div><div class="t" style="left:278.57142857142856px;width:1000px;text-align:center;top:1163.5px;font-size:20px;line-height:20px;color:#000;font-weight:700;">4</div><div class="t" style="left:278.57142857142856px;width:1000px;text-align:center;top:1349.8px;font-size:23px;line-height:23px;color:#333;font-weight:400;">Sep-25</div><div style="position:absolute;left:953.9275714285715px;top:883.3999999999999px;width:110.14485714285713px;height:438.2px;background:#544fbe;border-radius:4px 4px 0 0"></div><div class="t" style="left:509.0px;width:1000px;text-align:center;top:850.5px;font-size:20px;line-height:20px;color:#000;font-weight:700;">14</div><div class="t" style="left:509.0px;width:1000px;text-align:center;top:1349.8px;font-size:23px;line-height:23px;color:#333;font-weight:400;">Oct-25</div><div style="position:absolute;left:1184.3561428571427px;top:1196.3999999999999px;width:110.14485714285713px;height:125.2px;background:#544fbe;border-radius:4px 4px 0 0"></div><div class="t" style="left:739.4285714285713px;width:1000px;text-align:center;top:1163.5px;font-size:20px;line-height:20px;color:#000;font-weight:700;">4</div><div class="t" style="left:739.4285714285713px;width:1000px;text-align:center;top:1349.8px;font-size:23px;line-height:23px;color:#333;font-weight:400;">Nov-25</div><div style="position:absolute;left:1414.7847142857142px;top:1196.3999999999999px;width:110.14485714285713px;height:125.2px;background:#544fbe;border-radius:4px 4px 0 0"></div><div class="t" style="left:969.8571428571429px;width:1000px;text-align:center;top:1163.5px;font-size:20px;line-height:20px;color:#000;font-weight:700;">4</div><div class="t" style="left:969.8571428571429px;width:1000px;text-align:center;top:1349.8px;font-size:23px;line-height:23px;color:#333;font-weight:400;">Dec-25</div><div style="position:absolute;left:1645.2132857142856px;top:1227.6999999999998px;width:110.14485714285713px;height:31.3px;background:#5aaef6;border-radius:4px 4px 0 0"></div><div style="position:absolute;left:1645.2132857142856px;top:1258.0px;width:110.14485714285713px;height:2px;background:#fff"></div><div style="position:absolute;left:1645.2132857142856px;top:1260.0px;width:110.14485714285713px;height:61.6px;background:#544fbe"></div><div class="t" style="left:1200.2857142857142px;width:1000px;text-align:center;top:1194.8px;font-size:20px;line-height:20px;color:#000;font-weight:700;">3</div><div class="t" style="left:1200.2857142857142px;width:1000px;text-align:center;top:1349.8px;font-size:23px;line-height:23px;color:#333;font-weight:400;">Jan-26</div><div class="t" style="left:509.5px;width:1000px;text-align:center;top:1411.5px;font-size:23px;line-height:23px;color:#666;font-weight:400;">Months (Event Start Date)</div><div class="t" style="left:-43.5px;top:1074.5px;width:300px;text-align:center;font-size:23px;line-height:23px;color:#666;transform:rotate(-90deg)">&#35; Proposals Sent</div><div style="position:absolute;left:1855.3999999999999px;top:1115.3px;width:21.8px;height:21.8px;background:#5aaef6;border-radius:50%"></div><div class="t" style="left:1890.6px;top:1115.7px;font-size:23px;line-height:23px;color:#333;font-weight:400;">Hokkaido group sales proposal</div><div style="position:absolute;left:1855.3999999999999px;top:1149.6999999999998px;width:21.8px;height:21.8px;background:#544fbe;border-radius:50%"></div><div class="t" style="left:1890.6px;top:1150.1px;font-size:23px;line-height:23px;color:#333;font-weight:400;">Plaid group sales proposal</div><div class="t" style="left:70.4px;top:1498.8px;font-size:28.6px;line-height:28.6px;color:#9ca3af;font-weight:400;">Previous Year</div><div style="position:absolute;left:221px;top:1564.7px;width:1595px;height:2px;background:#e6e6e6"></div><div class="t" style="left:-806.8px;width:1000px;text-align:right;top:1556.2px;font-size:23px;line-height:23px;color:#333;font-weight:400;">1.25</div><div style="position:absolute;left:221px;top:1660.6px;width:1595px;height:2px;background:#e6e6e6"></div><div class="t" style="left:-806.8px;width:1000px;text-align:right;top:1652.1px;font-size:23px;line-height:23px;color:#333;font-weight:400;">1</div><div style="position:absolute;left:221px;top:1754.4px;width:1595px;height:2px;background:#e6e6e6"></div><div class="t" style="left:-806.8px;width:1000px;text-align:right;top:1745.9px;font-size:23px;line-height:23px;color:#333;font-weight:400;">0.75</div><div style="position:absolute;left:221px;top:1848.5px;width:1595px;height:2px;background:#e6e6e6"></div><div class="t" style="left:-806.8px;width:1000px;text-align:right;top:1840.0px;font-size:23px;line-height:23px;color:#333;font-weight:400;">0.5</div><div style="position:absolute;left:221px;top:1942.4px;width:1595px;height:2px;background:#e6e6e6"></div><div class="t" style="left:-806.8px;width:1000px;text-align:right;top:1933.9px;font-size:23px;line-height:23px;color:#333;font-weight:400;">0.25</div><div style="position:absolute;left:221px;top:2036.1000000000001px;width:1595px;height:2.2px;background:#3c3c3c"></div><div class="t" style="left:-806.8px;width:1000px;text-align:right;top:2027.7px;font-size:23px;line-height:23px;color:#333;font-weight:400;">0</div><div class="t" style="left:-165.57142857142856px;width:1000px;text-align:center;top:2066.1px;font-size:23px;line-height:23px;color:#333;font-weight:400;">Jul-24</div><div class="t" style="left:62.28571428571422px;width:1000px;text-align:center;top:2066.1px;font-size:23px;line-height:23px;color:#333;font-weight:400;">Aug-24</div><div class="t" style="left:290.1428571428571px;width:1000px;text-align:center;top:2066.1px;font-size:23px;line-height:23px;color:#333;font-weight:400;">Sep-24</div><div style="position:absolute;left:963.5421428571428px;top:1662.6px;width:108.91571428571429px;height:374.6px;background:#544fbe;border-radius:4px 4px 0 0"></div><div class="t" style="left:518.0px;width:1000px;text-align:center;top:1630.7px;font-size:20px;line-height:20px;color:#000;font-weight:700;">1</div><div class="t" style="left:518.0px;width:1000px;text-align:center;top:2066.1px;font-size:23px;line-height:23px;color:#333;font-weight:400;">Oct-24</div><div class="t" style="left:745.8571428571429px;width:1000px;text-align:center;top:2066.1px;font-size:23px;line-height:23px;color:#333;font-weight:400;">Nov-24</div><div class="t" style="left:973.7142857142858px;width:1000px;text-align:center;top:2066.1px;font-size:23px;line-height:23px;color:#333;font-weight:400;">Dec-24</div><div class="t" style="left:1201.5714285714287px;width:1000px;text-align:center;top:2066.1px;font-size:23px;line-height:23px;color:#333;font-weight:400;">Jan-25</div><div class="t" style="left:518.5px;width:1000px;text-align:center;top:2127.3px;font-size:23px;line-height:23px;color:#666;font-weight:400;">Months (Event Start Date)</div><div class="t" style="left:-45px;top:1789.5px;width:300px;text-align:center;font-size:23px;line-height:23px;color:#666;transform:rotate(-90deg)">&#35; Proposals Sent</div><div style="position:absolute;left:1855.3999999999999px;top:1831.6px;width:21.8px;height:21.8px;background:#5aaef6;border-radius:50%"></div><div class="t" style="left:1890.6px;top:1832.0px;font-size:23px;line-height:23px;color:#333;font-weight:400;">Hokkaido group sales proposal</div><div style="position:absolute;left:1855.3999999999999px;top:1866.6999999999998px;width:21.8px;height:21.8px;background:#544fbe;border-radius:50%"></div><div class="t" style="left:1890.6px;top:1867.1px;font-size:23px;line-height:23px;color:#333;font-weight:400;">Plaid group sales proposal</div><div class="t" style="left:2363px;top:717.5px;font-size:45px;line-height:45px;color:#1f2937;font-weight:700;transform:scaleX(1.12);transform-origin:0 0;">69</div><div class="t" style="left:2435.8px;top:727.1px;font-size:33.7px;line-height:33.7px;color:#e05a5a;font-weight:400;-webkit-text-stroke:0.4px #e05a5a;">Drafts</div><div class="t" style="left:2363px;top:1014.6px;font-size:32.7px;line-height:32.7px;color:#6b7280;font-weight:400;-webkit-text-stroke:0.3px #6b7280;">Proposals Sent</div><div class="t" style="left:2363px;top:1073.9px;font-size:45px;line-height:45px;color:#1f2937;font-weight:700;transform:scaleX(1.12);transform-origin:0 0;">40</div><div style="position:absolute;left:2874px;top:1009px;width:1.2px;height:134.6px;background:#e8eaee"></div><div class="t" style="left:2919.5px;top:1015.2px;font-size:32px;line-height:32px;color:#6b7280;font-weight:400;-webkit-text-stroke:0.3px #6b7280;">Total Revenue</div><div class="t" style="left:2919.5px;top:1074.5px;font-size:44.3px;line-height:44.3px;color:#4b5563;font-weight:700;">$687 K</div><div class="t" style="left:2363px;top:1379.0px;font-size:32.7px;line-height:32.7px;color:#6b7280;font-weight:400;-webkit-text-stroke:0.3px #6b7280;">By Type</div><div style="position:absolute;left:2381.9px;top:1455.3px;width:957.1px;height:220.1px;background:#aed7f8;border-radius:7px"></div><div style="position:absolute;left:3343.8px;top:1455.3px;width:20.6px;height:220.1px;background:#aed7f8;border-radius:7px"></div><div class="t" style="left:2361px;width:1000px;text-align:center;top:1557.1px;font-size:20px;line-height:20px;color:#000;font-weight:700;">Plaid Group Sales Proposal: 39</div><div class="t" style="left:2363px;top:1741.6px;font-size:28.6px;line-height:28.6px;color:#9ca3af;font-weight:400;">Previous Year</div><div style="position:absolute;left:2381.9px;top:1797.3px;width:859.4px;height:220.2px;background:#aed7f8;border-radius:7px"></div><div style="position:absolute;left:3246.1px;top:1797.3px;width:118.3px;height:163.7px;background:#aed7f8;border-radius:7px"></div><div style="position:absolute;left:3246.1px;top:1966.5px;width:118.3px;height:51px;background:#aed7f8;border-radius:7px"></div><div class="t" style="left:2311px;width:1000px;text-align:center;top:1898.7px;font-size:20px;line-height:20px;color:#000;font-weight:700;">Plaid Group Sales Proposal with Room Block Details: 28</div><div class="t" style="left:2805.2px;width:1000px;text-align:center;top:1870.1px;font-size:20px;line-height:20px;color:#000;font-weight:700;">Plaid Soci…</div><div class="t" style="left:2805.2px;width:1000px;text-align:center;top:1983.0px;font-size:20px;line-height:20px;color:#000;font-weight:700;">Plaid Grou…</div><div style="position:absolute;left:2860px;top:2221.8px;width:98px;height:52px;background:#fff;border:1.5px solid #d5d8dd;border-radius:26px;box-sizing:border-box"></div><div style="position:absolute;left:2971px;top:2221.8px;width:210.5px;height:52px;background:#fff;border:1.5px solid #d5d8dd;border-radius:26px;box-sizing:border-box"></div><div style="position:absolute;left:3193.7px;top:2221.8px;width:234.30000000000018px;height:52px;background:#fff;border:1.5px solid #d5d8dd;border-radius:26px;box-sizing:border-box"></div><div style="position:absolute;left:1359.3px;top:155.2px;width:737.5px;height:101.3px;background:#282b33;border:1px solid #0a0a0a;box-sizing:border-box;box-shadow:inset 0 0 0 2.4px #5a5c63,0 4px 14px rgba(0,0,0,0.4)"></div><div class="t" style="left:1440.5px;top:190.5px;font-size:31.8px;line-height:31.8px;color:#f4f4f4;font-weight:400;">To exit full screen, press and hold</div><div style="position:absolute;left:1928px;top:172px;width:73.5px;height:68px;border:2.2px solid #f4f4f4;border-radius:5px;box-sizing:border-box"></div><div class="t" style="left:1464.7px;width:1000px;text-align:center;top:190.5px;font-size:31.8px;line-height:31.8px;color:#f4f4f4;font-weight:400;">esc</div>
</body></html>
